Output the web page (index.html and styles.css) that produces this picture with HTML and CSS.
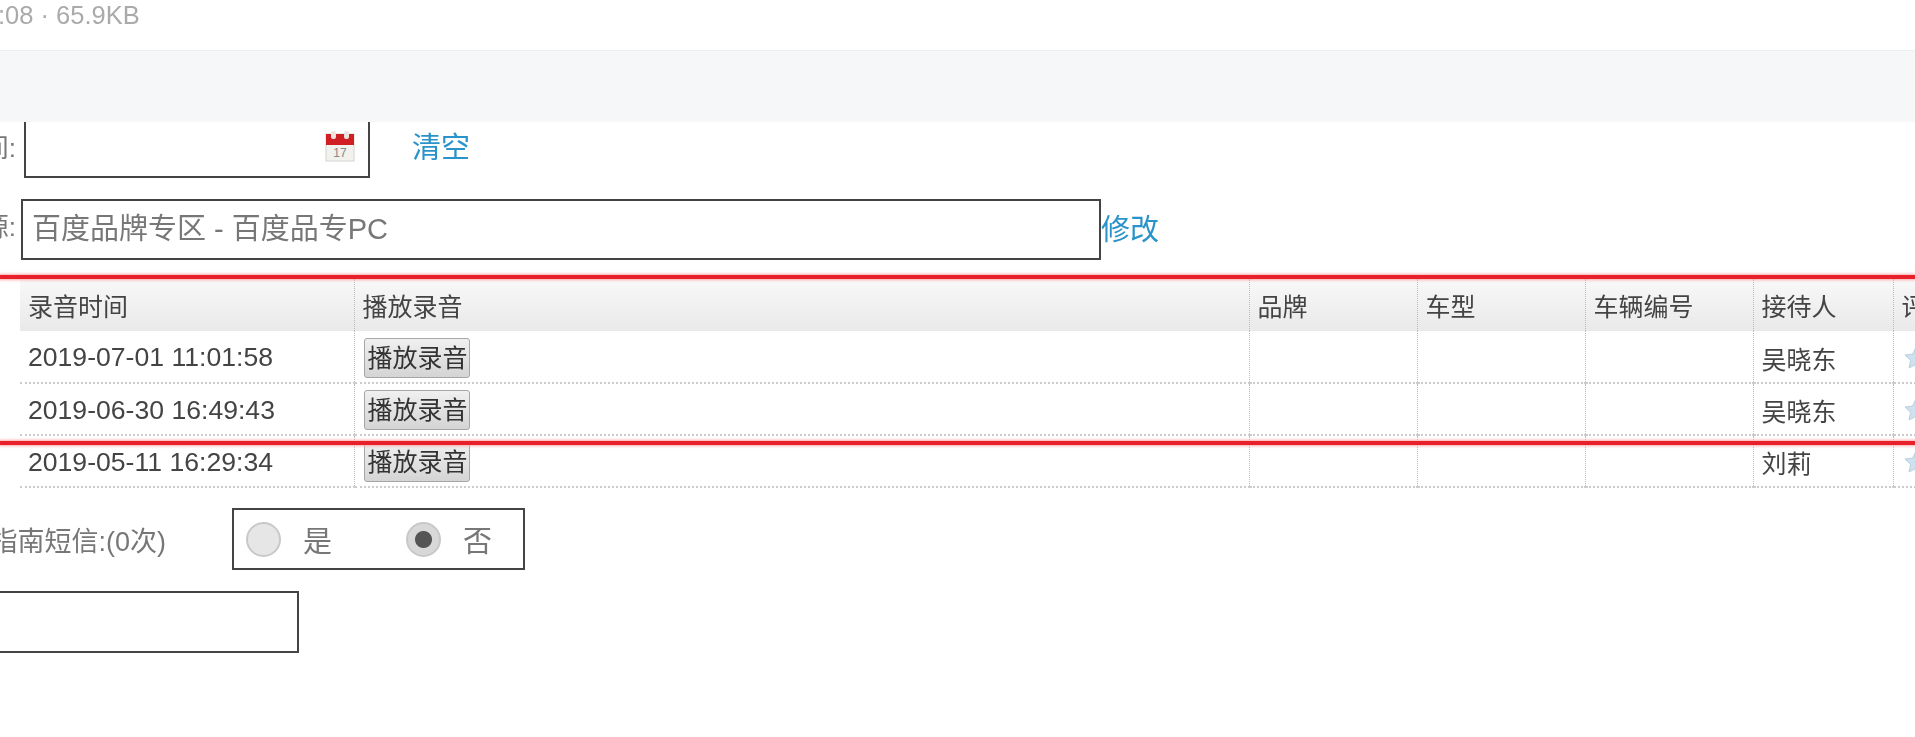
FILE: index.html
```html
<!DOCTYPE html>
<html lang="en">
<head>
  <meta charset="UTF-8" />
  <title>录音记录</title>
  <link rel="stylesheet" href="styles.css">
</head>
<body>
  <div class="page">
    <div class="meta">:08 · 65.9KB</div>
    <div class="band"></div>

    <!-- Filter rows -->
    <div class="row row-date">
      <span class="label label-date">时间:</span>
      <div class="box box-date">
        <svg class="cal" viewBox="0 0 30 32" width="30" height="32">
          <rect x="1" y="4" width="28" height="27" fill="#f1f1ee" stroke="#d4d4d0"/>
          <rect x="1" y="4" width="28" height="11" fill="#cf1f24"/>
          <rect x="6" y="1" width="5" height="8" rx="2" fill="#eee3dc"/>
          <rect x="19" y="1" width="5" height="8" rx="2" fill="#eee3dc"/>
          <text x="15" y="27" text-anchor="middle" class="cal-num">17</text>
        </svg>
      </div>
      <a class="link link-clear">清空</a>
    </div>

    <div class="row row-source">
      <span class="label label-source">来源:</span>
      <div class="box box-source">百度品牌专区 - 百度品专PC</div>
      <a class="link">修改</a>
    </div>

    <!-- Recordings -->
    <table class="records">
      <colgroup>
        <col class="c-time"><col class="c-play"><col class="c-mid"><col class="c-mid"><col class="c-mid"><col class="c-host"><col class="c-rate">
      </colgroup>
      <thead>
        <tr><th>录音时间</th><th>播放录音</th><th>品牌</th><th>车型</th><th>车辆编号</th><th>接待人</th><th>评价</th></tr>
      </thead>
      <tbody>
        <tr>
          <td class="time">2019-07-01 11:01:58</td>
          <td><button class="play">播放录音</button></td>
          <td></td><td></td><td></td>
          <td>吴晓东</td>
          <td><svg class="star" viewBox="0 0 24 24" width="24" height="24"><path d="M12 1l3.4 7 7.6 1-5.500 5.300 1.400 7.700L12 18.300 5.100 22l1.400-7.700L1 9l7.600-1z"/></svg></td>
        </tr>
        <tr>
          <td class="time">2019-06-30 16:49:43</td>
          <td><button class="play">播放录音</button></td>
          <td></td><td></td><td></td>
          <td>吴晓东</td>
          <td><svg class="star" viewBox="0 0 24 24" width="24" height="24"><path d="M12 1l3.4 7 7.6 1-5.500 5.300 1.400 7.700L12 18.300 5.100 22l1.400-7.700L1 9l7.600-1z"/></svg></td>
        </tr>
        <tr>
          <td class="time">2019-05-11 16:29:34</td>
          <td><button class="play">播放录音</button></td>
          <td></td><td></td><td></td>
          <td>刘莉</td>
          <td><svg class="star" viewBox="0 0 24 24" width="24" height="24"><path d="M12 1l3.4 7 7.6 1-5.500 5.300 1.400 7.700L12 18.300 5.100 22l1.400-7.700L1 9l7.600-1z"/></svg></td>
        </tr>
      </tbody>
    </table>

    <div class="row row-sms">
      <span class="label label-sms">指南短信:(0次)</span>
      <div class="box box-radio">
        <label class="opt opt-yes"><input type="radio" name="sms"><span>是</span></label>
        <label class="opt"><input type="radio" name="sms" checked><span>否</span></label>
      </div>
    </div>

    <div class="box box-note"></div>

    <!-- Red marks drawn over the table -->
    <div class="mark mark-top"></div>
    <div class="mark mark-bottom"></div>
  </div>
</body>
</html>
```

FILE: styles.css
```css
html, body {
  margin: 0;
  background: #fff;
}

body {
  width: 1915px;
  height: 737px;
  overflow: hidden;
}

.page {
  position: relative;
  width: 1915px;
  height: 737px;
  overflow: hidden;
  font-family: "Liberation Sans", "Noto Sans CJK SC", sans-serif;
  color: #444;
  filter: blur(0.5px);
}

.meta {
  height: 50px;
  margin-left: -2px;
  font-size: 25.5px;
  line-height: 30px;
  color: #aaa;
}

.band {
  height: 71px;
  background: #f5f7f8;
  border-top: 1px solid #eceeef;
}

.row {
  display: flex;
}

.label {
  display: flex;
  justify-content: flex-end;
  min-width: 0;
  white-space: nowrap;
  font-size: 26px;
  color: #777;
}

.box {
  box-sizing: border-box;
  border: 2px solid #444;
  background: #fff;
}

.link {
  color: #2a93c9;
  font-size: 29px;
}

/* date row */
.row-date {
  height: 56px;
}

.label-date {
  flex: 0 0 16px;
  line-height: 52px;
}

.box-date {
  display: flex;
  justify-content: flex-end;
  align-items: flex-start;
  width: 346px;
  margin-left: 8px;
  padding: 8px 13px 0 0;
  border-top: none;
}

.cal-num {
  font-size: 12px;
  fill: #888;
  font-family: "Liberation Sans", sans-serif;
}

.link-clear {
  margin-left: 42px;
  line-height: 52px;
}

/* source row */
.row-source {
  height: 61px;
  margin-top: 21px;
}

.label-source {
  flex: 0 0 16px;
  line-height: 57px;
}

.box-source {
  width: 1080px;
  margin-left: 5px;
  padding-left: 9px;
  font-size: 29px;
  line-height: 57px;
  color: #777;
}

.row-source .link {
  line-height: 62px;
}

/* table */
.records {
  width: 1940px;
  margin: 19px 0 0 20px;
  table-layout: fixed;
  border-collapse: collapse;
  font-size: 25px;
  color: #444;
}

.c-time { width: 334px; }
.c-play { width: 895px; }
.c-mid { width: 168px; }
.c-host { width: 140px; }
.c-rate { width: 67px; }

.records th {
  height: 52px;
  padding: 0 0 0 8px;
  text-align: left;
  font-weight: normal;
  background: linear-gradient(#f8f8f8, #e9e9e9);
  border-left: 1px dotted #bbb;
}

.records th:first-child,
.records td:first-child {
  border-left: none;
}

.records td {
  box-sizing: border-box;
  height: 52px;
  padding: 2px 0 0 8px;
  border-left: 1px dotted #bbb;
  border-bottom: 2px dotted #ccc;
}

.records td.time {
  font-size: 26.6px;
}

.play {
  display: block;
  box-sizing: border-box;
  width: 106px;
  height: 40px;
  margin: 0 0 0 1px;
  padding: 0 0 0 2px;
  font-family: inherit;
  font-size: 25px;
  line-height: 36px;
  color: #333;
  background: linear-gradient(#f0f0f0, #d4d4d4);
  border: 1px solid #a6a6a6;
  border-radius: 3px;
}

.star {
  display: block;
  margin-left: 2px;
}

.star path {
  fill: #cfe1ee;
  stroke: #b9d0e0;
}

/* sms row */
.row-sms {
  margin-top: 20px;
  align-items: center;
}

.label-sms {
  flex: 0 0 166px;
  font-size: 27px;
}

.box-radio {
  display: flex;
  align-items: center;
  width: 293px;
  height: 62px;
  margin-left: 66px;
  padding-left: 12px;
}

.opt {
  display: flex;
  align-items: center;
  gap: 22px;
  font-size: 29px;
  color: #777;
}

.opt-yes {
  margin-right: 74px;
}

.opt input {
  appearance: none;
  width: 35px;
  height: 35px;
  margin: 0;
  border: 2px solid #c8c8c8;
  border-radius: 50%;
  background: #e6e6e6;
}

.opt input:checked {
  background: radial-gradient(circle, #555 0 8px, #d8d8d8 9px);
}

.box-note {
  width: 309px;
  height: 62px;
  margin: 21px 0 0 -10px;
}

/* red marks */
.mark {
  position: absolute;
  left: 0;
  width: 100%;
  height: 4px;
  background: #e8202a;
  box-shadow: 0 0 3px 1px #f8a8a8;
}

.mark-top {
  top: 275px;
}

.mark-bottom {
  top: 441px;
}
```
